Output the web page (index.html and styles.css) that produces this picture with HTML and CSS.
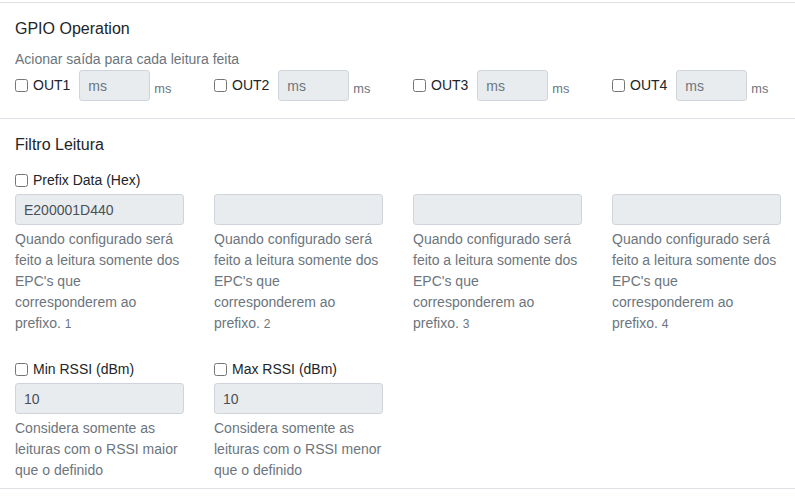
FILE: index.html
```html
<!DOCTYPE html>
<html lang="pt-BR">
<head>
<meta charset="utf-8">
<title>GPIO Operation</title>
<link rel="stylesheet" href="styles.css">
</head>
<body>
<div class="panel">
  <section class="sec sec-gpio">
    <h6 class="title">GPIO Operation</h6>
    <p class="subtitle">Acionar saída para cada leitura feita</p>
    <div class="grid4">
      <div class="col out">
        <label class="chk"><input type="checkbox">OUT1</label>
        <input class="fc fc-ms" type="text" placeholder="ms" readonly>
        <small class="suffix">ms</small>
      </div>
      <div class="col out">
        <label class="chk"><input type="checkbox">OUT2</label>
        <input class="fc fc-ms" type="text" placeholder="ms" readonly>
        <small class="suffix">ms</small>
      </div>
      <div class="col out">
        <label class="chk"><input type="checkbox">OUT3</label>
        <input class="fc fc-ms" type="text" placeholder="ms" readonly>
        <small class="suffix">ms</small>
      </div>
      <div class="col out">
        <label class="chk"><input type="checkbox">OUT4</label>
        <input class="fc fc-ms" type="text" placeholder="ms" readonly>
        <small class="suffix">ms</small>
      </div>
    </div>
  </section>
  <section class="sec sec-filter">
    <h6 class="title">Filtro Leitura</h6>
    <label class="chk prefix-label"><input type="checkbox">Prefix Data (Hex)</label>
    <div class="grid4">
      <div class="col">
        <input class="fc" type="text" value="E200001D440" readonly>
        <p class="help">Quando configurado será feito a leitura somente dos EPC's que corresponderem ao prefixo. <span class="num">1</span></p>
      </div>
      <div class="col">
        <input class="fc" type="text" value="" readonly>
        <p class="help">Quando configurado será feito a leitura somente dos EPC's que corresponderem ao prefixo. <span class="num">2</span></p>
      </div>
      <div class="col">
        <input class="fc" type="text" value="" readonly>
        <p class="help">Quando configurado será feito a leitura somente dos EPC's que corresponderem ao prefixo. <span class="num">3</span></p>
      </div>
      <div class="col">
        <input class="fc" type="text" value="" readonly>
        <p class="help">Quando configurado será feito a leitura somente dos EPC's que corresponderem ao prefixo. <span class="num">4</span></p>
      </div>
    </div>
    <div class="grid4 rssi">
      <div class="col">
        <label class="chk"><input type="checkbox">Min RSSI (dBm)</label>
        <input class="fc" type="text" value="10" readonly>
        <p class="help">Considera somente as leituras com o RSSI maior que o definido</p>
      </div>
      <div class="col">
        <label class="chk"><input type="checkbox">Max RSSI (dBm)</label>
        <input class="fc" type="text" value="10" readonly>
        <p class="help">Considera somente as leituras com o RSSI menor que o definido</p>
      </div>
    </div>
  </section>
</div>
</body>
</html>
```
FILE: styles.css
```css
html, body {
  margin: 0;
  overflow: hidden;
  background: #fff;
}
body {
  font-family: "Liberation Sans", Arial, sans-serif;
  font-size: 16px;
  line-height: 1.5;
  color: #212529;
}
.panel {
  margin-top: 2px;
  border-bottom: 1px solid #dee2e6;
}
.sec {
  border-top: 1px solid #dee2e6;
  padding: 14px 0 17px;
}
.sec-filter {
  padding-bottom: 7px;
}
.title {
  margin: 0 15px 8px;
  font-size: 16px;
  font-weight: 400;
  line-height: 24px;
}
.sec-filter .title {
  margin-bottom: 13px;
}
.subtitle {
  margin: 0 15px;
  font-size: 14px;
  line-height: 21px;
  color: #6c757d;
}
.grid4 {
  display: grid;
  grid-template-columns: repeat(4, 199px);
}
.col {
  padding: 0 15px;
  min-width: 0;
}
.out {
  display: flex;
  align-items: center;
}
.chk {
  display: flex;
  align-items: center;
  font-size: 14px;
  line-height: 21px;
  color: #212529;
}
.chk input {
  margin: 0 5px 0 0;
  width: 13px;
  height: 13px;
  flex: none;
}
.prefix-label {
  margin: 0 15px 3px;
}
.rssi {
  margin-top: 24px;
}
.rssi .chk {
  margin-bottom: 3px;
}
.fc {
  display: block;
  box-sizing: border-box;
  width: 100%;
  height: 31px;
  margin: 0;
  padding: 4px 8px;
  font-family: "Liberation Sans", Arial, sans-serif;
  font-size: 14px;
  line-height: 21px;
  color: #495057;
  background: #e9ecef;
  border: 1px solid #ced4da;
  border-radius: 3.2px;
  outline: none;
}
.fc::placeholder {
  color: #6c757d;
  opacity: 1;
}
.fc-ms {
  width: 71px;
  flex: none;
  margin-left: 9px;
}
.suffix {
  font-size: 12.8px;
  line-height: 19.2px;
  color: #6c757d;
  margin-left: 4px;
  align-self: flex-end;
  margin-bottom: 3px;
}
.help {
  margin: 4px 0 0;
  font-size: 14px;
  line-height: 21px;
  color: #6c757d;
}
.help .num {
  font-size: 12px;
}
```
